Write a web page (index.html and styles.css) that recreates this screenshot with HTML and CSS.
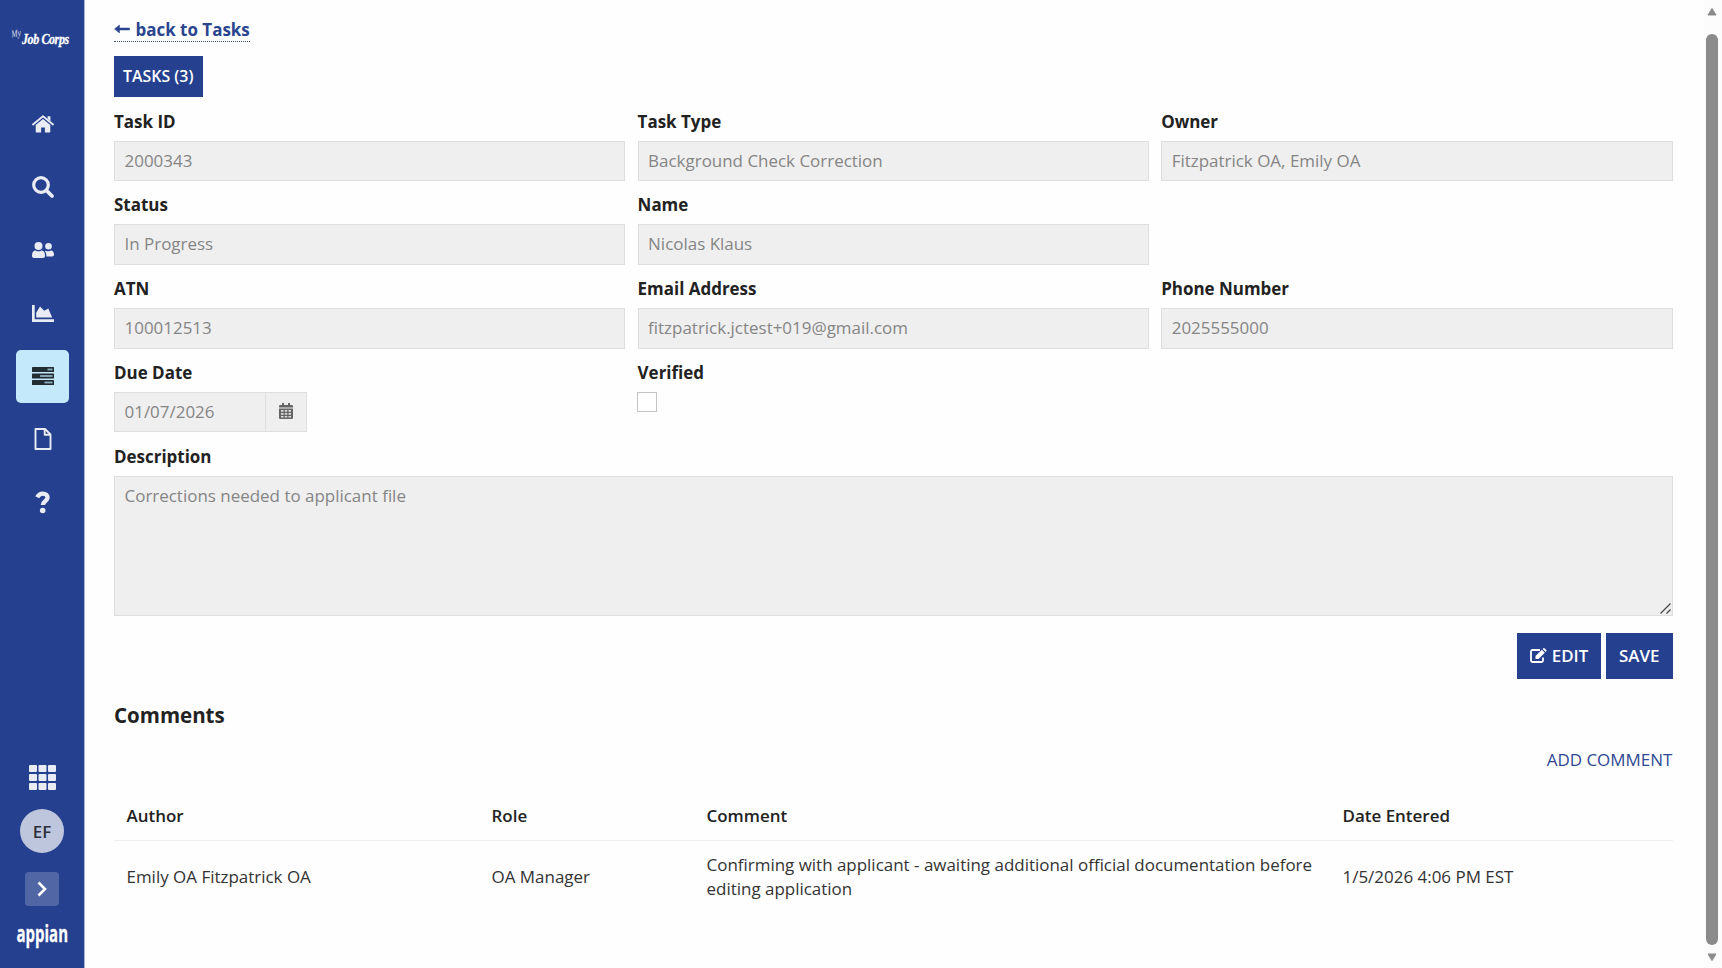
FILE: index.html
```html
<!DOCTYPE html>
<html lang="en">
<head>
<meta charset="utf-8">
<title>Tasks</title>
<link rel="stylesheet" href="styles.css">
</head>
<body>
<div class="app">
  <nav class="sidebar">
    <div class="logo"><span class="logo-my">My</span><span class="logo-name">Job Corps</span></div>
    <div class="nav-items">
      <a class="nav-item"><svg width="22" height="18" viewBox="0 0 22 18"><path d="M15.6 1.2h2.8v5l-2.8-2.4zM11 3.9l7.3 6.1v6.8q0 .8-.8.8h-4.6v-5h-3.8v5H4.500q-.8 0-.8-.8V10z" fill="currentColor"/><path d="M1 9.500L11 1.200l10 8.300" fill="none" stroke="currentColor" stroke-width="1.8" stroke-linecap="round" stroke-linejoin="round"/></svg></a>
      <a class="nav-item"><svg width="22" height="22" viewBox="0 0 22 22" fill="none" stroke="currentColor"><circle cx="9" cy="9" r="7.300" stroke-width="3.200"/><path d="M14.600 14.600l5.400 5.400" stroke-width="3.700" stroke-linecap="round"/></svg></a>
      <a class="nav-item"><svg width="22" height="16" viewBox="0 0 22 16" fill="currentColor"><circle cx="6.500" cy="4" r="4"/><path d="M0 13.200C0 10.200 1.500 8.400 3.500 8.400q3 1.700 6 0c2 0 3.500 1.800 3.500 4.800V14q0 2-2 2H2q-2 0-2-2z"/><circle cx="16.500" cy="4.300" r="3.300"/><path d="M13.800 8.800q2.700 1.200 5.200-.2c1.900 0 3 1.700 3 4.200 0 1.200-.6 1.700-1.800 1.700h-5.800c0-2.200-.2-3.700-1.500-5.200z"/></svg></a>
      <a class="nav-item"><svg width="22" height="17" viewBox="0 0 22 17" fill="currentColor"><path d="M0 0h2.700v14.200H22V17H0z"/><path d="M4.200 12.600V7.700L8 1.500l4.300 4.300 4-2.200 3.900 9z"/></svg></a>
      <a class="nav-item active"><svg width="22" height="18" viewBox="0 0 22 18"><g fill="currentColor"><rect width="22" height="5" rx=".6"/><rect y="6.500" width="22" height="5" rx=".6"/><rect y="13" width="22" height="5" rx=".6"/></g><g fill="#8fb0be"><rect x="15.500" y="1.600" width="5" height="1.800"/><rect x="8" y="8.100" width="12.500" height="1.800"/><rect x="12.500" y="14.600" width="8" height="1.800"/></g></svg></a>
      <a class="nav-item"><svg width="18" height="22" viewBox="0 0 18 22" fill="none" stroke="currentColor" stroke-width="1.900" stroke-linejoin="round"><path d="M1.500 1H11l5.500 5.500V21h-15z"/><path d="M10.700 1.200v5.600h5.600"/></svg></a>
      <a class="nav-item"><svg width="16" height="23" viewBox="0 0 16 23"><path d="M2.200 6.300C3.500 3.700 5.200 2.600 7.800 2.600c2.800 0 4.800 1.600 4.800 3.900 0 3.400-4.700 3.600-4.700 7.500" fill="none" stroke="currentColor" stroke-width="4.300"/><circle cx="7.700" cy="19.500" r="2.800" fill="currentColor"/></svg></a>
    </div>
    <div class="nav-bottom">
      <svg class="grid-icon" width="27" height="25" viewBox="0 0 27 25" fill="currentColor"><rect width="8" height="7" rx="1"/><rect x="9.500" width="8" height="7" rx="1"/><rect x="19" width="8" height="7" rx="1"/><rect y="9" width="8" height="7" rx="1"/><rect x="9.500" y="9" width="8" height="7" rx="1"/><rect x="19" y="9" width="8" height="7" rx="1"/><rect y="18" width="8" height="7" rx="1"/><rect x="9.500" y="18" width="8" height="7" rx="1"/><rect x="19" y="18" width="8" height="7" rx="1"/></svg>
      <div class="avatar">EF</div>
      <div class="expand"><svg width="10" height="16" viewBox="0 0 10 16" fill="none" stroke="#fff" stroke-width="2.600"><path d="M1.500 1.500L8 8l-6.500 6.500"/></svg></div>
      <div class="brand">appian</div>
    </div>
  </nav>
  <main class="content">
    <a class="back"><svg width="16" height="10" viewBox="0 0 16 10"><path d="M.5 5l5-4v3h10v2h-10v3z" fill="currentColor" stroke="currentColor" stroke-width=".5"/></svg><span>back to Tasks</span></a>
    <div class="tabs"><button class="btn tab">TASKS (3)</button></div>
    <div class="form">
      <div class="field"><label>Task ID</label><div class="input">2000343</div></div>
      <div class="field"><label>Task Type</label><div class="input">Background Check Correction</div></div>
      <div class="field"><label>Owner</label><div class="input">Fitzpatrick OA, Emily OA</div></div>
      <div class="field"><label>Status</label><div class="input">In Progress</div></div>
      <div class="field"><label>Name</label><div class="input">Nicolas Klaus</div></div>
      <div></div>
      <div class="field"><label>ATN</label><div class="input">100012513</div></div>
      <div class="field"><label>Email Address</label><div class="input">fitzpatrick.jctest+019@gmail.com</div></div>
      <div class="field"><label>Phone Number</label><div class="input">2025555000</div></div>
      <div class="field"><label>Due Date</label><div class="input date"><span>01/07/2026</span><i class="date-btn"><svg width="14" height="16" viewBox="0 0 14 16"><path d="M3 0h2v2h4V0h2v2h1.700Q14 2 14 3.300V4.500H0V3.300Q0 2 1.300 2H3zM0 5.500h14v9.200q0 1.300-1.300 1.300H1.300Q0 16 0 14.700z" fill="#666"/><path d="M2 7h2.500v1.800H2zm3.800 0h2.400v1.800H5.800zm3.700 0H12v1.800H9.500zM2 10h2.500v1.800H2zm3.800 0h2.400v1.800H5.800zm3.700 0H12v1.800H9.500zM2 13h2.500v1.500H2zm3.800 0h2.400v1.500H5.800zm3.700 0H12v1.500H9.500z" fill="#dcdcdc"/></svg></i></div></div>
      <div class="field"><label>Verified</label><div class="checkbox"></div></div>
      <div></div>
      <div class="field wide"><label>Description</label><div class="input area">Corrections needed to applicant file<svg class="grip" width="11" height="11" viewBox="0 0 11 11" stroke="#444" stroke-width="1.200"><path d="M.5 10.500l10-10M6.500 10.500l4-4"/></svg></div></div>
    </div>
    <div class="actions">
      <button class="btn edit"><svg width="17" height="15" viewBox="0 0 17 15"><path d="M10 2H2.500Q1 2 1 3.500v9Q1 14 2.500 14h9q1.500 0 1.500-1.500V9.500" fill="none" stroke="#fff" stroke-width="1.800"/><path d="M5.500 11V8l6.300-6.300 3 3L8.500 11zM12.600.9l.7-.6q.6-.5 1.200 0l1.800 1.800q.5.600 0 1.200l-.7.600z" fill="#fff"/></svg>EDIT</button>
      <button class="btn save">SAVE</button>
    </div>
    <h2>Comments</h2>
    <div class="add"><a>ADD COMMENT</a></div>
    <div class="table">
      <div class="row head"><div>Author</div><div>Role</div><div>Comment</div><div>Date Entered</div></div>
      <div class="row"><div>Emily OA Fitzpatrick OA</div><div>OA Manager</div><div>Confirming with applicant - awaiting additional official documentation before<br>editing application</div><div>1/5/2026 4:06 PM EST</div></div>
    </div>
  </main>
  <div class="scrollbar">
    <svg width="10" height="8" viewBox="0 0 10 8"><path d="M5 .5l4 6.500H1z" fill="#8b8b8b" stroke="#8b8b8b" stroke-linejoin="round"/></svg>
    <div class="thumb"></div>
    <svg width="10" height="8" viewBox="0 0 10 8"><path d="M5 7.500L9 1H1z" fill="#8b8b8b" stroke="#8b8b8b" stroke-linejoin="round"/></svg>
  </div>
</div>
</body>
</html>
```

FILE: styles.css
```css
* { box-sizing: border-box; }
body { margin: 0; font-family: "Open Sans", "Noto Sans", sans-serif; font-size: 16.970px; color: #222; background: #fefefe; }
.app { display: flex; width: 1722px; height: 968px; overflow: hidden; }

.sidebar { width: 85px; background: #25408f; border-right: 1px solid #a9b3d3; display: flex; flex-direction: column; align-items: center; color: #e9ecf4; }
.logo { width: 84px; height: 92px; padding: 29px 0 0 15px; display: flex; color: #fff; font-family: "Liberation Serif", serif; font-style: italic; white-space: nowrap; line-height: 20px; }
.logo-my { width: 7px; flex: none; font-size: 10px; line-height: 9px; transform: rotate(-8deg) scaleX(.75); transform-origin: left; opacity: .8; }
.logo-name { flex: none; font-size: 14.500px; font-weight: bold; letter-spacing: -.5px; transform: scaleX(.83); transform-origin: left; -webkit-text-stroke: .3px #fff; }
.nav-items { display: flex; flex-direction: column; gap: 10px; padding-top: 5.500px; }
.nav-item { width: 53px; height: 53px; border-radius: 5px; display: flex; align-items: center; justify-content: center; padding-left: 1px; }
.nav-item.active { background: #c4e9fb; color: #222d33; }
.nav-bottom { margin-top: auto; height: 203px; display: flex; flex-direction: column; align-items: center; }
.avatar { width: 44px; height: 44px; margin-top: 19px; border-radius: 50%; background: #bec6dd; color: #2b303b; display: flex; align-items: center; justify-content: center; font-weight: 600; flex: none; }
.expand { width: 34px; height: 34px; margin-top: 19px; border-radius: 4px; background: #5166a5; display: flex; align-items: center; justify-content: center; flex: none; }
.brand { margin-top: 13px; color: #fff; font-weight: 700; font-size: 24px; line-height: 28px; transform: scaleX(.625); -webkit-text-stroke: .3px #fff; }

.content { width: 1588px; padding: 17px 0 0 29px; flex: none; }
.back { display: flex; align-items: center; gap: 5.500px; width: 135.500px; height: 25px; color: #2a4590; font-weight: 700; font-size: 16.970px; border-bottom: 1px dotted #444f77; white-space: nowrap; line-height: 25px; }
.back svg { flex: none; }
.tabs { display: flex; padding-top: 13.500px; }
.btn { background: #25408f; color: #fff; border: 0; padding: 0; font: 600 16.900px "Open Sans", sans-serif; display: flex; align-items: center; justify-content: center; }
.tab { width: 88.500px; height: 41px; font-size: 15.900px; padding-bottom: 1px; }
.form { display: grid; grid-template-columns: 511.300px 511.300px 511.900px; column-gap: 12.300px; grid-auto-rows: 83.750px; padding-top: 12px; }
.field label { display: block; height: 32px; line-height: 25px; font-weight: 700; color: #222; }
.input { height: 40.500px; background: #efefef; border: 1px solid #dedede; color: #858585; padding: 0 9.500px; line-height: 38px; white-space: nowrap; }
.date { width: 193px; padding-right: 0; display: flex; justify-content: space-between; }
.date-btn { width: 41px; border-left: 1px solid #dedede; display: flex; align-items: center; justify-content: center; padding: 0 1px 3px 0; }
.checkbox { width: 20px; height: 20px; border: 1px solid #c4c4c4; background: #fff; margin-left: -.5px; }
.wide { grid-column: 1 / -1; }
.area { height: 140px; position: relative; }
.grip { position: absolute; right: 1px; bottom: 1px; }
.actions { display: flex; justify-content: flex-end; gap: 4.500px; padding: 106px 0 0; }
.actions .btn { height: 46px; padding-bottom: 1px; }
.edit { width: 84px; gap: 5px; }
.save { width: 67.500px; }
h2 { margin: 20.500px 0 0; font-size: 20.500px; line-height: 30px; font-weight: 700; }
.add { display: flex; justify-content: flex-end; padding: 18px .7px 0 0; color: #2f4892; line-height: 24px; }
.table { padding-top: 18.500px; }
.row { display: grid; grid-template-columns: 365px 215px 636px 1fr; padding-left: 12.500px; height: 70.500px; align-items: center; line-height: 23.500px; color: #333; white-space: nowrap; }
.row.head { height: 51px; font-weight: 600; color: #222; border-bottom: 1px solid #eee; }

.scrollbar { width: 18px; margin-left: auto; background: #fcfcfc; display: flex; flex-direction: column; align-items: center; padding: 8px 3px 7px 0; height: 968px; }
.thumb { width: 12px; height: 911px; margin: 18px 0 8px; border-radius: 6px; background: #8b8b8b; flex: none; }
```
